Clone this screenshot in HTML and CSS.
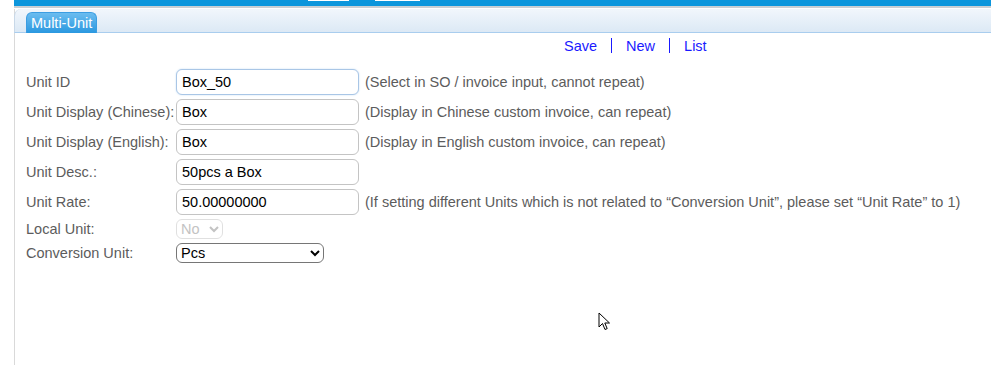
FILE: index.html
```html
<!DOCTYPE html>
<html lang="en">
<head>
    <meta charset="UTF-8">
    <title>Multi-Unit</title>
    <link rel="stylesheet" href="styles.css">
</head>
<body>
<div class="page">

    <!-- Top bar (cut off) -->
    <div class="topbar">
        <span class="top-field f1"></span>
        <span class="top-field f2"></span>
    </div>

    <div class="panel">
        <!-- Tab header -->
        <div class="tab-head">
            <span class="tab">Multi-Unit</span>
        </div>

        <!-- Actions -->
        <div class="actions">
            <a href="#">Save</a>
            <span class="sep"></span>
            <a href="#">New</a>
            <span class="sep"></span>
            <a href="#">List</a>
        </div>

        <!-- Form -->
        <div class="form">
            <label>Unit ID</label>
            <div class="field">
                <input type="text" class="focus" value="Box_50">
                <span class="hint">(Select in SO / invoice input, cannot repeat)</span>
            </div>

            <label>Unit Display (Chinese):</label>
            <div class="field">
                <input type="text" value="Box">
                <span class="hint">(Display in Chinese custom invoice, can repeat)</span>
            </div>

            <label>Unit Display (English):</label>
            <div class="field">
                <input type="text" value="Box">
                <span class="hint">(Display in English custom invoice, can repeat)</span>
            </div>

            <label>Unit Desc.:</label>
            <div class="field">
                <input type="text" value="50pcs a Box">
            </div>

            <label>Unit Rate:</label>
            <div class="field">
                <input type="text" value="50.00000000">
                <span class="hint">(If setting different Units which is not related to “Conversion Unit”, please set “Unit Rate” to 1)</span>
            </div>

            <label class="small">Local Unit:</label>
            <div class="field small">
                <select class="local" disabled>
                    <option>No</option>
                </select>
            </div>

            <label class="small">Conversion Unit:</label>
            <div class="field small">
                <select class="conv">
                    <option>Pcs</option>
                </select>
            </div>
        </div>
    </div>

    <!-- mouse pointer -->
    <svg class="cursor" width="13" height="20" viewBox="0 0 13 20">
        <path d="M1 1 L1 15 L4.5 11.5 L7 17.5 L9.2 16.6 L6.8 11 L11.5 11 Z" fill="#fff" stroke="#000" stroke-width="1" stroke-linejoin="round"/>
    </svg>
</div>
</body>
</html>
```

FILE: styles.css
```css
* {
    box-sizing: border-box;
}

body {
    margin: 0;
    background: #fff;
    font-family: Arial, "Liberation Sans", sans-serif;
    font-size: 14.5px;
    color: #5c5c5c;
}

.page {
    margin-left: 14px;
    height: 365px;
    position: relative;
    overflow: hidden;
}

/* Top bar */
.topbar {
    height: 8px;
    background: #0c96dc;
    border-bottom: 2px solid #c9cfd4;
    display: flex;
    padding-left: 294px;
}

.top-field {
    display: block;
    height: 1px;
    background: #fff;
}

.f1 {
    width: 41px;
}

.f2 {
    width: 45px;
    margin-left: 26px;
}

/* Panel */
.panel {
    border-left: 1px solid #d9d9d9;
    height: 100%;
}

.tab-head {
    height: 24px;
    margin-top: 1px;
    background: linear-gradient(#f1f6fc, #dce9f5);
    border-bottom: 1px solid #a9cdee;
    border-top-left-radius: 7px;
    border-left: 1px solid #c8d8e8;
    margin-left: -1px;
    padding-left: 11px;
    display: flex;
    align-items: flex-end;
}

.tab {
    display: inline-block;
    height: 21px;
    margin-bottom: -1px;
    padding: 1px 4px 0 4px;
    background: linear-gradient(#6bbcef, #2a98e0);
    border: 1px solid #3b9de2;
    border-bottom: none;
    border-radius: 6px 6px 0 0;
    color: #fff;
    font-size: 14.5px;
    line-height: 18px;
}

/* Actions */
.actions {
    display: flex;
    align-items: center;
    padding-left: 549px;
    margin-top: 4px;
    height: 17px;
}

.actions a {
    color: #1a1aff;
    text-decoration: none;
}

.sep {
    width: 1px;
    height: 15px;
    background: #1a1aff;
    margin: 0 14px;
}

/* Form */
.form {
    display: grid;
    grid-template-columns: 150px auto;
    row-gap: 4px;
    padding-left: 11px;
    margin-top: 15px;
}

.form label {
    height: 26px;
    line-height: 26px;
    white-space: nowrap;
}

.form label.small,
.field.small {
    height: 20px;
    line-height: 20px;
}

.field {
    display: flex;
    align-items: center;
    height: 26px;
}

.field input {
    width: 183px;
    height: 26px;
    border: 1px solid #c4c4c4;
    border-radius: 6px;
    padding: 0 5px;
    font-family: Arial, "Liberation Sans", sans-serif;
    font-size: 14.5px;
    color: #000;
    outline: none;
}

.field input.focus {
    border-color: #a9c6e6;
    box-shadow: 0 0 2px #c6dcf2;
}

.hint {
    margin-left: 6px;
    white-space: nowrap;
}

select {
    height: 20px;
    border: 1px solid #767676;
    border-radius: 6px;
    font-family: Arial, "Liberation Sans", sans-serif;
    font-size: 14.5px;
    color: #000;
    background: #fff;
    padding: 0;
}

select.local {
    width: 47px;
    color: #aaa;
    border-color: #d4d4d4;
}

select.conv {
    width: 148px;
}

.cursor {
    position: absolute;
    left: 584px;
    top: 312px;
}
```
